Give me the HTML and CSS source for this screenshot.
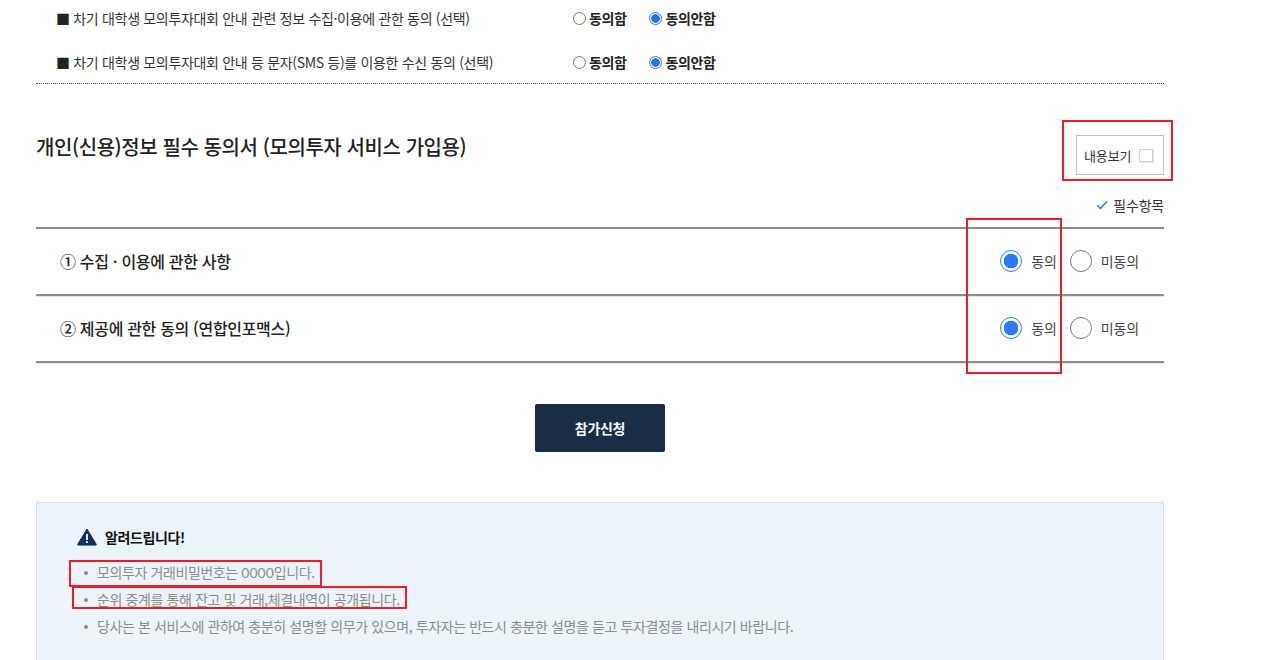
FILE: index.html
```html
<!DOCTYPE html>
<html lang="ko">
<head>
<meta charset="utf-8">
<title>참가신청</title>
<link rel="stylesheet" href="styles.css">
</head>
<body>
<main class="page">
  <section class="optional">
    <div class="opt-row">
      <p class="opt-label"><span class="sq">■</span> 차기 대학생 모의투자대회 안내 관련 정보 수집·이용에 관한 동의 (선택)</p>
      <div class="opt-choices">
        <label class="mini"><span class="mini-radio"></span>동의함</label>
        <label class="mini"><span class="mini-radio on"></span>동의안함</label>
      </div>
    </div>
    <div class="opt-row">
      <p class="opt-label"><span class="sq">■</span> 차기 대학생 모의투자대회 안내 등 문자(SMS 등)를 이용한 수신 동의 (선택)</p>
      <div class="opt-choices">
        <label class="mini"><span class="mini-radio"></span>동의함</label>
        <label class="mini"><span class="mini-radio on"></span>동의안함</label>
      </div>
    </div>
  </section>

  <section class="head">
    <h2 class="title">개인(신용)정보 필수 동의서 (모의투자 서비스 가입용)</h2>
    <div class="view">내용보기<span class="view-check"></span></div>
  </section>

  <div class="required">
    <svg class="tick" width="12" height="10" viewBox="0 0 12 10"><path d="M1 5l3.4 3.4L11 1.4" fill="none" stroke="#2f6fd0" stroke-width="1.4"/></svg>
    필수항목
  </div>

  <section class="agree">
    <div class="agree-row">
      <span class="agree-label">① 수집 · 이용에 관한 사항</span>
      <div class="agree-choices">
        <label class="big"><span class="big-radio on"></span>동의</label>
        <label class="big"><span class="big-radio"></span>미동의</label>
      </div>
    </div>
    <div class="agree-row">
      <span class="agree-label">② 제공에 관한 동의 (연합인포맥스)</span>
      <div class="agree-choices">
        <label class="big"><span class="big-radio on"></span>동의</label>
        <label class="big"><span class="big-radio"></span>미동의</label>
      </div>
    </div>
  </section>

  <div class="actions"><button class="submit" type="button">참가신청</button></div>

  <section class="notice">
    <h3 class="notice-title">
      <svg width="20" height="18" viewBox="0 0 20 18"><path d="M10 1 19.2 16.2a.6.6 0 0 1-.5.9H1.3a.6.6 0 0 1-.5-.9z" fill="#12305f" stroke="#12305f" stroke-linejoin="round"/><rect x="9.1" y="6" width="1.8" height="6" fill="#fff"/><rect x="9.1" y="13.2" width="1.8" height="1.8" fill="#fff"/></svg>
      알려드립니다!
    </h3>
    <ul class="notice-list">
      <li>모의투자 거래비밀번호는 <span class="num">0000</span>입니다.</li>
      <li>순위 중계를 통해 잔고 및 거래,체결내역이 공개됩니다.</li>
      <li>당사는 본 서비스에 관하여 충분히 설명할 의무가 있으며, 투자자는 반드시 충분한 설명을 듣고 투자결정을 내리시기 바랍니다.</li>
    </ul>
  </section>
</main>

<div class="mark mark-view"></div>
<div class="mark mark-agree"></div>
<div class="mark mark-l1"></div>
<div class="mark mark-l2"></div>
</body>
</html>
```

FILE: styles.css
```css
* { box-sizing: border-box; }
html, body { margin: 0; padding: 0; height: 660px; overflow: hidden; background: #fff; }
body { font-family: "Noto Sans CJK KR", "Noto Sans", sans-serif; color: #222; position: relative; }
p, h2, h3, ul { margin: 0; padding: 0; }

.page { width: 1128px; margin-left: 36px; }

.optional { height: 84px; border-bottom: 1px dotted #333; padding-left: 20px; display: flex; flex-direction: column; gap: 8px; }
.opt-row { display: flex; align-items: center; height: 36px; }
.opt-label { width: 517px; font-size: 14px; letter-spacing: -0.32px; color: #333; line-height: 20px; white-space: nowrap; }
.sq { color: #222; }
.opt-choices { display: flex; gap: 23px; }
.mini { display: flex; align-items: center; gap: 3px; font-size: 14px; font-weight: 700; letter-spacing: -0.4px; color: #222; line-height: 20px; }
.mini-radio { width: 13px; height: 13px; border-radius: 50%; border: 1px solid #767676; background: #fff; }
.mini-radio.on { border-color: #2f6fe0; background: radial-gradient(circle, #2f6fe0 0 4px, #fff 4.6px); }

.head { display: flex; justify-content: space-between; align-items: flex-start; height: 92px; padding-top: 51px; }
.title { font-size: 20px; font-weight: 500; letter-spacing: -0.42px; line-height: 24px; color: #222; }
.view { width: 88px; height: 40px; border: 1px solid #c4c4c4; display: flex; align-items: center; padding-left: 7px; gap: 8px; font-size: 13px; letter-spacing: -0.1px; color: #333; }
.view-check { width: 14px; height: 13px; border: 1px solid #d0d0d0; box-shadow: 1px 1px 0 #e6e6e6; background: #fff; }

.required { display: flex; justify-content: flex-end; align-items: center; gap: 5px; height: 28px; margin-top: 14px; margin-bottom: 9px; padding-top: 2px; font-size: 14px; letter-spacing: -0.2px; color: #333; }

.agree { border-top: 2px solid #8c8c8c; }
.agree-row { display: flex; justify-content: space-between; align-items: center; height: 67px; border-bottom: 2px solid #8c8c8c; padding: 0 25px 1px 24px; box-shadow: 0 1px 0 #e6e6e6; }
.agree-label { font-size: 16px; font-weight: 500; letter-spacing: -0.32px; color: #222; }
.agree-choices { display: flex; gap: 13px; }
.big { display: flex; align-items: center; gap: 9px; font-size: 14px; letter-spacing: -0.15px; color: #444; }
.big-radio { width: 22px; height: 22px; border-radius: 50%; border: 1px solid #777; background: #fff; }
.big-radio.on { border-color: #2f7bff; background: radial-gradient(circle, #2f7bff 0 7px, #fff 7.6px); }

.actions { display: flex; justify-content: center; margin-top: 41px; }
.submit { width: 130px; height: 48px; border: 0; border-radius: 2px; background: #1b2d45; color: #fff; font: 700 14px "Noto Sans CJK KR", sans-serif; letter-spacing: -0.3px; }

.notice { margin-top: 50px; height: 200px; background: #edf3fb; border: 1px solid #dcdfe4; padding: 25px 0 0 40px; }
.notice-title { display: flex; align-items: center; gap: 8px; font-size: 14px; font-weight: 700; letter-spacing: -0.4px; color: #111; height: 22px; margin-top: -2px; }
.notice-list { list-style: none; margin-top: 11px; }
.notice-list li { position: relative; padding-left: 20px; height: 27px; line-height: 26px; font-size: 14px; letter-spacing: -0.4px; color: #8a8f8a; white-space: nowrap; }
.notice-list li::before { content: ""; position: absolute; left: 7px; top: 12px; width: 4px; height: 4px; border-radius: 50%; background: #8a8f8a; }
.num { font-family: "Lato", sans-serif; letter-spacing: 0; }

.mark { position: absolute; border: 2px solid #ee1c25; pointer-events: none; }
.mark-view { left: 1062px; top: 120px; width: 111px; height: 61px; }
.mark-agree { left: 966px; top: 218px; width: 96px; height: 156px; }
.mark-l1 { left: 69px; top: 560px; width: 253px; height: 27px; }
.mark-l2 { left: 72px; top: 586px; width: 335px; height: 23px; }
```
